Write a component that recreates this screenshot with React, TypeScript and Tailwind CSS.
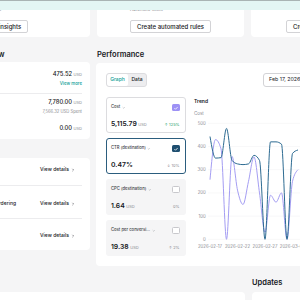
import type { ReactNode } from "react";

const muted = "text-[#8a8b91]";

const costSeries = [443, 350, 352, 478, 340, 325, 322, 325, 362, 340, 0, 420, 420, 410, 0, 370, 385];
const ctrSeries = [257, 430, 390, 0, 357, 212, 150, 250, 355, 200, 30, 190, 160, 200, 0, 250, 300];

const xLabels = ["2026-02-17", "2026-02-22", "2026-02-27", "2026-03-04"];
const yTicks = [500, 400, 300, 200, 100, 0];

const xOf = (i: number) => 16 + 5.5 * i;
const yOf = (v: number) => 121.3 - v * 0.232;

// monotone-x curve, same idea as d3's curveMonotoneX
function monotonePath(values: number[]) {
    const pts = values.map((v, i) => [xOf(i), yOf(v)]);
    const n = pts.length;
    const h = pts[1][0] - pts[0][0];
    const s: number[] = [];
    for (let i = 0; i < n - 1; i++) s.push((pts[i + 1][1] - pts[i][1]) / h);
    const t = new Array(n).fill(0);
    for (let i = 1; i < n - 1; i++) {
        const s0 = s[i - 1];
        const s1 = s[i];
        const p = (s0 + s1) / 2;
        t[i] = (Math.sign(s0) + Math.sign(s1)) * Math.min(Math.abs(s0), Math.abs(s1), 0.5 * Math.abs(p)) || 0;
    }
    t[0] = (3 * s[0] - t[1]) / 2;
    t[n - 1] = (3 * s[n - 2] - t[n - 2]) / 2;
    let d = `M${pts[0][0]},${pts[0][1]}`;
    for (let i = 0; i < n - 1; i++) {
        const [x0, y0] = pts[i];
        const [x1, y1] = pts[i + 1];
        const dx = (x1 - x0) / 3;
        d += ` C${x0 + dx},${y0 + dx * t[i]} ${x1 - dx},${y1 - dx * t[i + 1]} ${x1},${y1}`;
    }
    return d;
}

function ChevronDown() {
    return (
        <svg width="3.5" height="3.5" viewBox="0 0 10 10" className="ml-[1.5px] shrink-0">
            <path d="M2 3.5l3 3 3-3" fill="none" stroke="#8a8b91" strokeWidth="1.2" />
        </svg>
    );
}

function ChevronRight() {
    return (
        <svg width="4" height="4" viewBox="0 0 10 10" className="ml-[2px] shrink-0">
            <path d="M3.5 2l3 3-3 3" fill="none" stroke="#161823" strokeWidth="1.1" />
        </svg>
    );
}

function Check({ color }: { color?: string }) {
    if (!color) {
        return <span className="h-[7.5px] w-[7.5px] shrink-0 rounded-[1.5px] border border-[#c8c8cc] bg-white" />;
    }
    return (
        <span className="flex h-[7.5px] w-[7.5px] shrink-0 items-center justify-center rounded-[1.5px]" style={{ background: color }}>
            <svg width="6" height="6" viewBox="0 0 10 10">
                <path d="M2.3 5.2l1.9 1.9 3.6-3.8" fill="none" stroke="white" strokeWidth="1.3" />
            </svg>
        </span>
    );
}

function TopCard({ note, button, pad }: { note?: string; button: string; pad: string }) {
    return (
        <div className={`flex h-[43px] w-[147px] shrink-0 flex-col items-start justify-end rounded-[4px] bg-white pb-[4px] ${pad}`}>
            {note && <div className={`text-[4.5px] leading-[5px] ${muted}`}>{note}</div>}
            <button className="mt-[8px] flex h-[13.5px] items-center rounded-[2px] border border-[#d3d3d6] bg-white px-[6px] text-[6px] font-medium whitespace-nowrap">
                {button}
            </button>
        </div>
    );
}

function Amount({ value }: { value: string }) {
    return (
        <div className="flex items-baseline justify-end gap-[1.5px] leading-[8px]">
            <span className="text-[5.8px] font-medium">{value}</span>
            <span className={`text-[4px] ${muted}`}>USD</span>
        </div>
    );
}

function DetailRow({ label, className }: { label: string; className: string }) {
    return (
        <div className={`flex items-center justify-between ${className}`}>
            <span className="w-[38px] text-right text-[5px] font-medium whitespace-nowrap">{label}</span>
            <span className="mr-[7px] flex items-center text-[5px] font-medium">
                View details
                <ChevronRight />
            </span>
        </div>
    );
}

type Metric = {
    label: string;
    value: string;
    unit?: string;
    change: ReactNode;
    box: string;
    check?: string;
};

const metrics: Metric[] = [
    {
        label: "Cost",
        value: "5,115.79",
        unit: "USD",
        change: <span className="text-[#1f9d68]">↑ 125%</span>,
        box: "border border-[#dcdcdf] bg-white",
        check: "#9d91f5",
    },
    {
        label: "CTR (destination)",
        value: "0.47%",
        change: <span className={muted}>↓ 10%</span>,
        box: "border border-[#2b5d7e] bg-white",
        check: "#1f4f70",
    },
    {
        label: "CPC (destination)",
        value: "1.64",
        unit: "USD",
        change: <span className={muted}>0%</span>,
        box: "border border-transparent bg-[#f5f5f6]",
    },
    {
        label: "Cost per conversi...",
        value: "19.38",
        unit: "USD",
        change: <span className={muted}>↑ 2%</span>,
        box: "border border-transparent bg-[#f5f5f6]",
    },
];

function MetricCard({ m }: { m: Metric }) {
    return (
        <div className={`flex h-[36px] flex-col rounded-[3px] pt-[5.5px] pr-[5.5px] pl-[4px] ${m.box}`}>
            <div className="flex h-[8px] items-center justify-between">
                <span className="flex items-center text-[4.2px] font-medium text-[#3b3c44]">
                    {m.label}
                    <ChevronDown />
                </span>
                <Check color={m.check} />
            </div>
            <div className="mt-[8.5px] flex items-baseline justify-between leading-[8px]">
                <span className="flex items-baseline gap-[1.5px]">
                    <span className="text-[6.8px] font-semibold">{m.value}</span>
                    {m.unit && <span className={`text-[4px] ${muted}`}>{m.unit}</span>}
                </span>
                <span className="text-[4px]">{m.change}</span>
            </div>
        </div>
    );
}

function TrendChart() {
    return (
        <svg width="120" height="140" viewBox="0 0 120 140" className="block overflow-visible">
            {yTicks.map((v) => (
                <g key={v}>
                    <line x1="14.5" x2="120" y1={yOf(v)} y2={yOf(v)} stroke="#e2e2e5" strokeWidth="0.5" strokeDasharray="1 1" />
                    <text x="11.7" y={yOf(v) + 1.5} textAnchor="end" fontSize="4.3" fill="#8a8b91" fontFamily="Inter, sans-serif">
                        {v}
                    </text>
                </g>
            ))}
            {xLabels.map((l, k) => (
                <text key={l} x={16 + 27.5 * k} y="130.3" textAnchor="middle" fontSize="4.3" fill="#8a8b91" fontFamily="Inter, sans-serif">
                    {l}
                </text>
            ))}
            <path d={monotonePath(ctrSeries)} fill="none" stroke="#a49df3" strokeWidth="1" />
            <path d={monotonePath(costSeries)} fill="none" stroke="#2d6b92" strokeWidth="1" />
        </svg>
    );
}

export default function App() {
    return (
        <div className="relative h-[300px] w-[300px] overflow-hidden bg-[#f5f5f6] font-['Inter',sans-serif] text-[#161823]">
            <div className="absolute inset-x-0 top-0 z-10 h-[10px] border-t border-[#a9b4b4] bg-[#e3f6f4]" />

            <div className="mt-[-6px] ml-[-57px] flex gap-[7px]">
                <TopCard note="Get insights" button="View insights" pad="pl-[33px]" />
                <TopCard note="Automate tasks" button="Create automated rules" pad="pl-[33px]" />
                <TopCard button="Create ad" pad="pl-[35px]" />
            </div>

            <div className="mt-[13px] ml-[-30px] flex gap-[6px]">
                <div className="w-[120px] shrink-0">
                    <h2 className="h-[10px] text-[7.5px] leading-[10px] font-semibold">Overview</h2>
                    <div className="mt-[2px] rounded-[4px] bg-white px-[8px] pt-[8px] pb-[6px]">
                        <Amount value="475.52" />
                        <div className="mt-[1.5px] text-right text-[4.4px] leading-[6px] font-medium text-[#0b9c95]">View more</div>
                        <div className="mt-[6px] h-px bg-[#ececee]" />
                        <div className="mt-[4px]">
                            <Amount value="7,780.00" />
                        </div>
                        <div className={`mt-[2px] text-right text-[4.2px] leading-[6px] ${muted}`}>7,566.32 USD Spent</div>
                        <div className="mt-[9.5px]">
                            <Amount value="0.00" />
                        </div>
                    </div>

                    <div className="mt-[19px] rounded-[4px] bg-white px-[8px]">
                        <DetailRow label="" className="h-[27px] pb-[3px]" />
                        <div className="h-px bg-[#ececee]" />
                        <DetailRow label="Re-ordering" className="h-[32px] pt-[4px]" />
                        <div className="h-px bg-[#ececee]" />
                        <DetailRow label="" className="h-[31px] pt-[2px]" />
                    </div>
                </div>

                <div className="w-[237px] shrink-0">
                    <h2 className="h-[10px] pl-[1px] text-[7.5px] leading-[10px] font-semibold">Performance</h2>
                    <div className="mt-[3px] h-[203px] rounded-[4px] bg-white px-[10px] pt-[10px]">
                        <div className="flex items-center justify-between">
                            <div className="flex h-[13.5px] overflow-hidden rounded-[3px] border border-[#dcdcdf] bg-[#ededef]">
                                <span className="flex w-[21px] items-center justify-center rounded-[2px] bg-white text-[5px] font-medium text-[#0b9c95]">Graph</span>
                                <span className="flex w-[18px] items-center justify-center text-[5px] font-medium">Data</span>
                            </div>
                            <div className="flex h-[13.5px] w-[60px] items-center rounded-[3px] border border-[#d3d3d6] bg-white pl-[5px] text-[5.3px] whitespace-nowrap">
                                Feb 17, 2026 - Mar 18, 2026
                            </div>
                        </div>

                        <div className="mt-[10.5px] flex">
                            <div className="flex w-[80px] shrink-0 flex-col gap-[5px]">
                                {metrics.map((m) => (
                                    <MetricCard key={m.label} m={m} />
                                ))}
                            </div>
                            <div className="ml-[8px] flex-1">
                                <div className="mt-[1px] text-[5px] leading-[6px] font-semibold">Trend</div>
                                <div className={`mt-[6.5px] text-[4.5px] leading-[6px] ${muted}`}>Cost</div>
                                <div className="mt-[1.5px]">
                                    <TrendChart />
                                </div>
                            </div>
                        </div>
                    </div>
                </div>
            </div>

            <div className="mt-[12px] ml-[-30px] flex gap-[7px]">
                <div className="w-[275px] shrink-0">
                    <h2 className="h-[10px] text-[7.5px] leading-[10px] font-semibold">For you</h2>
                    <div className="mt-[3.5px] h-[40px] rounded-[4px] bg-white" />
                </div>
                <div className="w-[120px] shrink-0">
                    <h2 className="h-[10px] text-[7.5px] leading-[10px] font-semibold">Updates</h2>
                    <div className="mt-[3.5px] h-[40px] rounded-[4px] bg-white" />
                </div>
            </div>
        </div>
    );
}
